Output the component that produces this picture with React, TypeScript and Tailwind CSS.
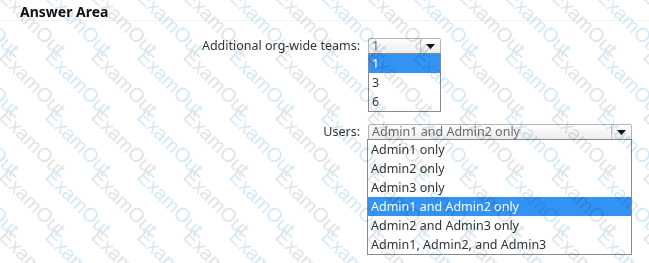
import React from 'react';

const teamOptions = ['1', '3', '6'];
const userOptions = [
  'Admin1 only',
  'Admin2 only',
  'Admin3 only',
  'Admin1 and Admin2 only',
  'Admin2 and Admin3 only',
  'Admin1, Admin2, and Admin3',
];

function Arrow() {
  return (
    <svg width="9" height="5" viewBox="0 0 9 5">
      <path d="M0 0 H9 L4.5 5 Z" fill="#111" />
    </svg>
  );
}

function SelectBox({ value, width }: { value: string; width: string }) {
  return (
    <div className={`flex h-[16px] ${width} items-stretch rounded-[2px] border border-[#b4b4b4] bg-gradient-to-b from-white to-[#ececec]`}>
      <span className="flex-1 truncate pl-[3px] text-[12.5px] leading-[14px] text-[#6a6a6a]">{value}</span>
      <span className="flex w-[20px] items-center justify-center border-l border-[#c8c8c8]">
        <Arrow />
      </span>
    </div>
  );
}

function OptionList({ items, selected, width }: { items: string[]; selected: number; width: string }) {
  return (
    <ul className={`${width} border border-[#8a8a8a] bg-white`}>
      {items.map((item, i) => (
        <li
          key={item}
          className={
            i === selected
              ? 'h-[19px] bg-[#3393f3] pl-[3px] text-[12.5px] leading-[19px] text-white'
              : 'h-[19px] pl-[3px] text-[12.5px] leading-[19px] text-[#333]'
          }
        >
          {item}
        </li>
      ))}
    </ul>
  );
}

// faint diagonal "ExamOut" stamp tiled over the whole area
function Watermark() {
  const marks = [];
  for (let r = 0; r < 6; r++) {
    for (let c = 0; c < 16; c++) {
      marks.push(
        <span
          key={`${r}-${c}`}
          className="absolute origin-top-left rotate-[45deg] whitespace-nowrap text-[20px] leading-none"
          style={{ left: -36 + c * 46, top: -14 + r * 60, color: c % 2 === 0 ? '#d3eaf5' : '#e3e3e3' }}
        >
          ExamOut
        </span>
      );
    }
  }
  return (
    <div className="pointer-events-none absolute inset-0 overflow-hidden font-['Liberation_Sans',sans-serif] mix-blend-multiply">
      {marks}
    </div>
  );
}

export default function App() {
  return (
    <div className="relative isolate h-[263px] w-[649px] overflow-hidden bg-white font-['Noto_Sans',sans-serif] text-[#333]">
      <div className="h-[21px] border-b border-[#f3f3f3] pl-[20px] pt-[4px] text-[14px] font-bold leading-[16px] text-[#111]">
        Answer Area
      </div>

      <div className="mt-[17px] flex">
        <div className="w-[362px] pr-[2px] text-right text-[12.5px] leading-[16px]">Additional org-wide teams:</div>
        <div className="ml-[6px] flex flex-col">
          <SelectBox value="1" width="w-[73px]" />
          <div className="-mt-[1px]">
            <OptionList items={teamOptions} selected={0} width="w-[73px]" />
          </div>
        </div>
      </div>

      <div className="mt-[12px] flex">
        <div className="w-[362px] pr-[2px] text-right text-[12.5px] leading-[16px]">Users:</div>
        <div className="ml-[5px] flex flex-col">
          <div className="pl-[1px]">
            <SelectBox value="Admin1 and Admin2 only" width="w-[264px]" />
          </div>
          <div className="-mt-[1px]">
            <OptionList items={userOptions} selected={3} width="w-[265px]" />
          </div>
        </div>
      </div>

      <Watermark />
    </div>
  );
}
